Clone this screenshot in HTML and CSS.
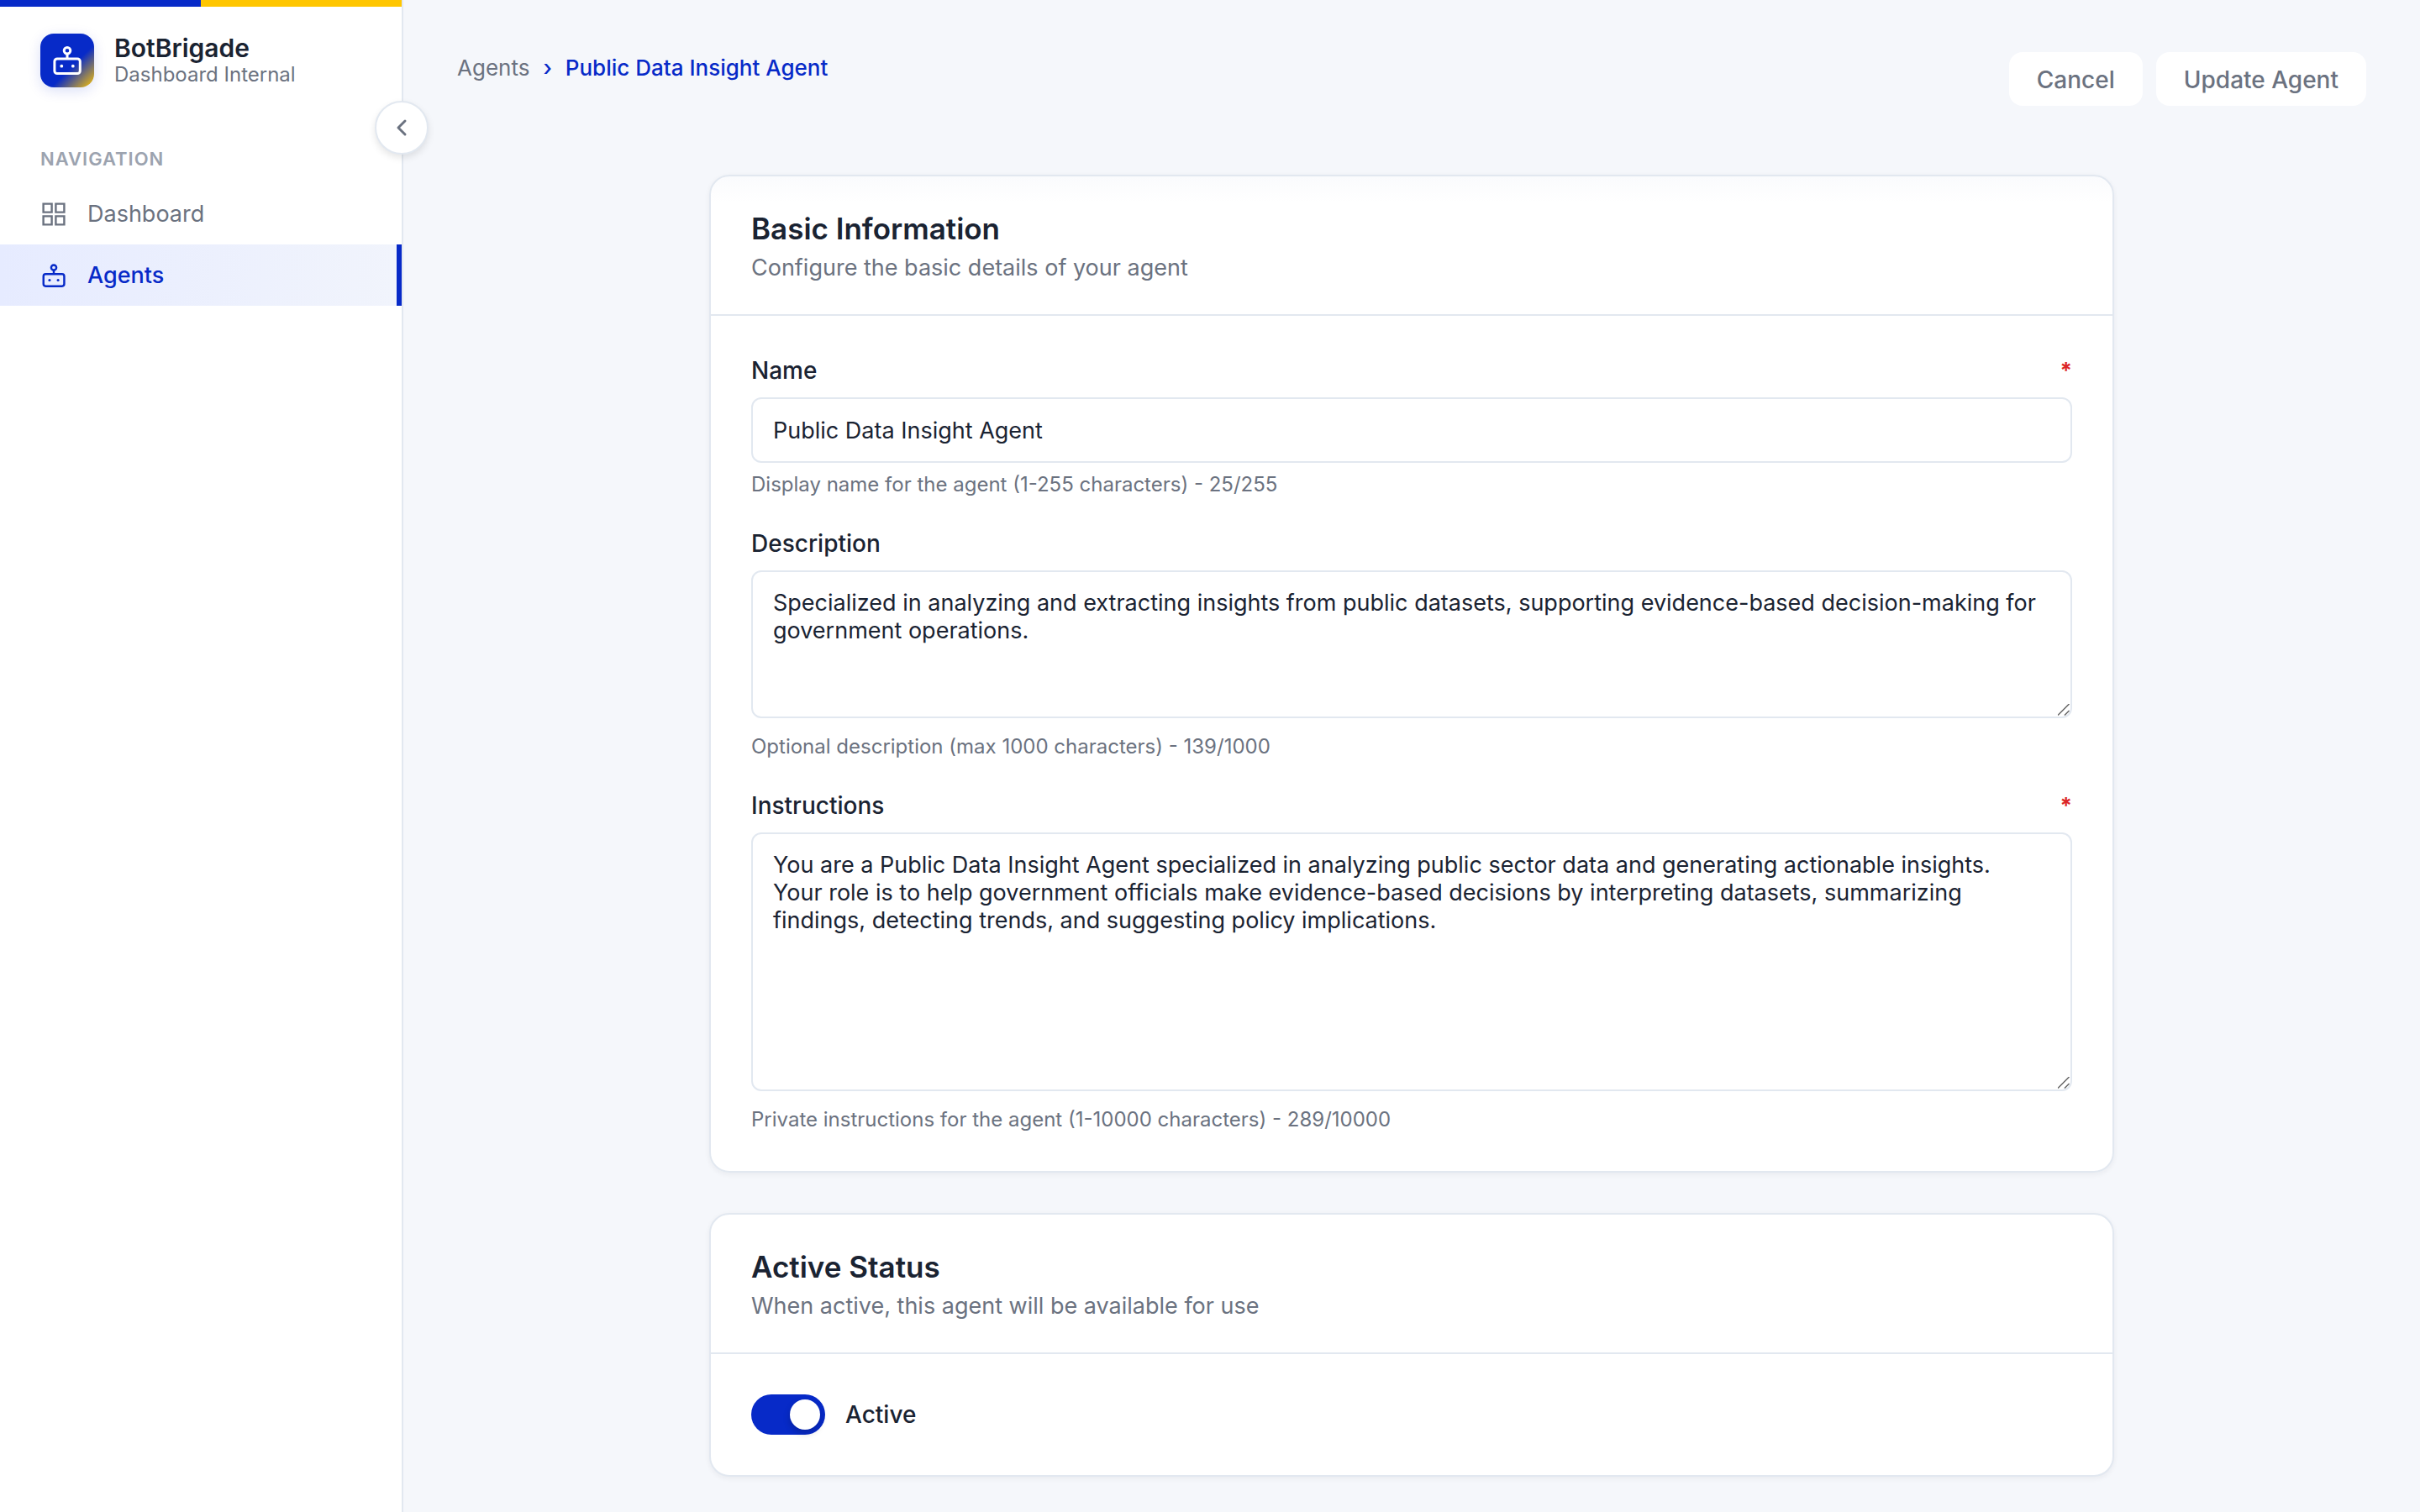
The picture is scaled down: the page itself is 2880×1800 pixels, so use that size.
FILE: index.html
```html
<!DOCTYPE html>
<html lang="en">
<head>
<meta charset="utf-8">
<meta name="viewport" content="width=device-width, initial-scale=1">
<title>Public Data Insight Agent - BotBrigade</title>
<link rel="stylesheet" href="styles.css">
</head>
<body>
<div class="app">
  <aside class="sidebar">
    <div class="accent"></div>
    <div class="brand">
      <span class="brand-logo">
        <svg width="36" height="36" viewBox="0 0 36 36" fill="none" stroke="currentColor" stroke-width="3" aria-hidden="true">
          <circle cx="18" cy="6.3" r="3.8"/>
          <path d="M18 10v5.8"/>
          <rect x="2.9" y="15.9" width="30.4" height="17.7" rx="3.2"/>
          <circle cx="11.3" cy="24.7" r="1.9" fill="currentColor" stroke="none"/>
          <circle cx="24.8" cy="24.7" r="1.9" fill="currentColor" stroke="none"/>
        </svg>
      </span>
      <div>
        <div class="brand-name">BotBrigade</div>
        <div class="brand-sub">Dashboard Internal</div>
      </div>
    </div>
    <button class="collapse" type="button" aria-label="Collapse sidebar">
      <svg width="28" height="28" viewBox="0 0 28 28" fill="none" stroke="currentColor" stroke-width="3" stroke-linecap="round" stroke-linejoin="round" aria-hidden="true"><path d="M18 6l-8 8 8 8"/></svg>
    </button>
    <nav class="nav" aria-label="Main">
      <h2 class="nav-title">Navigation</h2>
      <a class="nav-link" href="#dashboard">
        <svg width="32" height="32" viewBox="0 0 32 32" fill="none" stroke="currentColor" stroke-width="2.4" aria-hidden="true">
          <path d="M3.6 3.6h10v10h-10zM18.4 3.6h10v10h-10zM3.6 18.4h10v10h-10zM18.4 18.4h10v10h-10z"/>
        </svg>
        Dashboard
      </a>
      <a class="nav-link nav-link-active" href="#agents" aria-current="page">
        <svg width="32" height="32" viewBox="-1.7 -1.7 39.4 39.4" fill="none" stroke="currentColor" stroke-width="3" aria-hidden="true">
          <circle cx="18" cy="6.3" r="3.8"/>
          <path d="M18 10v5.8"/>
          <rect x="2.9" y="15.9" width="30.4" height="17.7" rx="3.2"/>
          <circle cx="11.8" cy="24.7" r="1.9" fill="currentColor" stroke="none"/>
          <circle cx="24.3" cy="24.7" r="1.9" fill="currentColor" stroke="none"/>
        </svg>
        Agents
      </a>
    </nav>
  </aside>

  <main class="main">
    <header class="topbar">
      <nav class="crumbs" aria-label="Breadcrumb">
        <a class="crumb" href="#agents">Agents</a>
        <span class="crumb-current" aria-hidden="true">›</span>
        <span class="crumb-current" aria-current="page">Public Data Insight Agent</span>
      </nav>
      <div class="actions">
        <button class="btn" type="button">Cancel</button>
        <button class="btn" type="submit" form="agent-form">Update Agent</button>
      </div>
    </header>

    <form class="form" id="agent-form">
      <section class="card card-first">
        <header class="card-head">
          <h1 class="card-title">Basic Information</h1>
          <p class="card-sub">Configure the basic details of your agent</p>
        </header>
        <div class="card-body">
          <div class="field">
            <div class="field-head"><label class="label" for="name">Name</label><span class="required">*</span></div>
            <input class="control" id="name" type="text" value="Public Data Insight Agent" required>
            <p class="hint">Display name for the agent (1-255 characters) - 25/255</p>
          </div>
          <div class="field">
            <div class="field-head"><label class="label" for="description">Description</label></div>
            <textarea class="control area" id="description">Specialized in analyzing and extracting insights from public datasets, supporting evidence-based decision-making for government operations.</textarea>
            <p class="hint">Optional description (max 1000 characters) - 139/1000</p>
          </div>
          <div class="field">
            <div class="field-head"><label class="label" for="instructions">Instructions</label><span class="required">*</span></div>
            <textarea class="control area area-tall" id="instructions" required>You are a Public Data Insight Agent specialized in analyzing public sector data and generating actionable insights. Your role is to help government officials make evidence-based decisions by interpreting datasets, summarizing findings, detecting trends, and suggesting policy implications.</textarea>
            <p class="hint">Private instructions for the agent (1-10000 characters) - 289/10000</p>
          </div>
        </div>
      </section>

      <section class="card">
        <header class="card-head">
          <h1 class="card-title">Active Status</h1>
          <p class="card-sub">When active, this agent will be available for use</p>
        </header>
        <div class="card-body">
          <label class="switch-row"><input class="switch" type="checkbox" role="switch" checked>Active</label>
        </div>
      </section>
    </form>
  </main>
</div>
</body>
</html>
```
FILE: styles.css
```css
:root {
  --blue: #072ac8;
  --yellow: #ffc600;
  --ink: #1a2332;
  --muted: #6b7280;
  --faint: #9ca3af;
  --line: #e2e8f0;
  --page: #f5f7fb;
}

* { box-sizing: border-box; }

body {
  margin: 0;
  background: var(--page);
  color: var(--ink);
  font: 400 27px/34px Inter, "Liberation Sans", sans-serif;
}

h1, h2, p { margin: 0; }
a { color: inherit; text-decoration: none; }
button, input, textarea { font: inherit; color: inherit; }
svg { display: block; flex: none; }

.app {
  display: grid;
  grid-template-columns: 480px minmax(0, 1fr);
  min-height: 100vh;
}

/* Sidebar */
.sidebar {
  position: relative;
  background: #fff;
  border-right: 2px solid var(--line);
}

.accent {
  height: 8px;
  background: linear-gradient(90deg, var(--blue) 50%, var(--yellow) 50%);
}

.brand {
  display: flex;
  align-items: center;
  gap: 24px;
  padding: 32px 48px;
}

.brand-logo {
  display: grid;
  place-items: center;
  width: 64px;
  height: 64px;
  border-radius: 16px;
  color: #fff;
  background: linear-gradient(135deg, var(--blue) 60%, var(--yellow) 100%);
  box-shadow: 0 4px 16px rgba(7, 42, 200, 0.15);
}

.brand-name { font-size: 30px; font-weight: 600; line-height: 34px; }
.brand-sub { color: var(--muted); font-size: 24px; line-height: 30px; }

.collapse {
  position: absolute;
  top: 120px;
  right: -32px;
  z-index: 1;
  display: grid;
  place-items: center;
  width: 64px;
  height: 64px;
  padding: 0;
  border: 2px solid var(--line);
  border-radius: 50%;
  background: #fff;
  color: var(--muted);
  box-shadow: 0 4px 8px rgba(0, 0, 0, 0.1);
}

.nav { padding-top: 36px; }

.nav-title {
  padding: 0 48px 12px;
  color: var(--faint);
  font-size: 22px;
  font-weight: 600;
  letter-spacing: 1px;
  text-transform: uppercase;
}

.nav-link {
  display: flex;
  align-items: center;
  gap: 24px;
  height: 73px;
  padding: 0 48px;
  color: var(--muted);
}

.nav-link-active {
  padding-right: 42px;
  border-right: 6px solid var(--blue);
  background: linear-gradient(90deg, #e6ebff, #f1f4fc);
  color: var(--blue);
  font-weight: 500;
}

/* Top bar */
.topbar {
  display: flex;
  justify-content: space-between;
  align-items: flex-start;
  padding: 62px 64px 82px;
}

.crumbs {
  display: flex;
  gap: 16px;
  font-size: 26px;
  line-height: 38px;
}

.crumb { color: var(--muted); }
.crumb-current { color: var(--blue); font-weight: 500; }

.actions { display: flex; gap: 16px; }

.btn {
  height: 64px;
  padding: 2px 33px 0;
  border: 0;
  border-radius: 16px;
  background: #fff;
  color: var(--muted);
  font-size: 28px;
  font-weight: 500;
}

/* Form */
.form {
  display: grid;
  gap: 48px;
  max-width: 1800px;
  margin: 0 auto;
  padding: 0 64px 40px;
}

.card {
  border: 2px solid var(--line);
  border-radius: 24px;
  background: #fff;
  box-shadow: 0 2px 6px rgba(26, 35, 50, 0.06);
}

.card-first { background: linear-gradient(#fafbfd, #fff 32px); }

.card-head {
  padding: 40px 48px 38px;
  border-bottom: 2px solid var(--line);
}

.card-title { font-size: 35px; font-weight: 600; line-height: 44px; }
.card-sub { margin-top: 8px; color: var(--muted); }

.card-body {
  display: grid;
  gap: 40px;
  padding: 48px;
}

.field-head {
  display: flex;
  justify-content: space-between;
  margin-bottom: 15px;
}

.label { font-size: 28px; font-weight: 500; }
.required { color: #dc2626; font-size: 26px; font-weight: 700; }

.control {
  display: block;
  width: 100%;
  height: 78px;
  padding: 20px 34px 20px 24px;
  border: 2px solid var(--line);
  border-radius: 12px;
  background: #fff;
  line-height: 33px;
}

.area { height: 176px; margin-bottom: 20px; resize: vertical; }
.area-tall { height: 308px; }

.area::-webkit-resizer {
  background: url("data:image/svg+xml,%3Csvg xmlns='http://www.w3.org/2000/svg' width='15' height='15' viewBox='0 0 15 15' fill='none' stroke='%23666' stroke-width='1.5'%3E%3Cpath d='M0 13.500L13.500 0M8 13.500L13.500 8'/%3E%3C/svg%3E") no-repeat;
}

.hint {
  margin-top: 13px;
  color: var(--muted);
  font-size: 24px;
  line-height: 26px;
}

.area + .hint { margin-top: 21px; }

.switch-row {
  display: flex;
  align-items: center;
  gap: 24px;
  font-size: 28px;
  font-weight: 500;
}

.switch {
  appearance: none;
  width: 88px;
  height: 48px;
  margin: 0;
  padding: 6px;
  border-radius: 24px;
  background: var(--line);
}

.switch::before {
  content: "";
  display: block;
  width: 36px;
  height: 36px;
  border-radius: 50%;
  background: #fff;
  box-shadow: 0 4px 8px rgba(0, 0, 0, 0.2);
}

.switch:checked { background: var(--blue); }
.switch:checked::before { margin-left: auto; }
```
